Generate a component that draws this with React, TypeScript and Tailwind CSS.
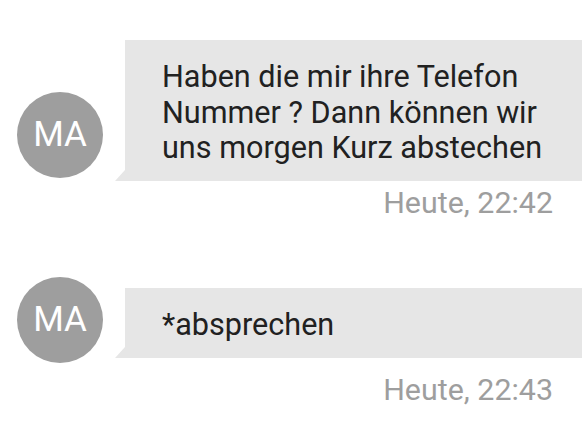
import React from 'react';

type Msg = { initials: string; lines: string[]; time: string };

const messages: Msg[] = [
  {
    initials: 'MA',
    lines: ['Haben die mir ihre Telefon', 'Nummer ? Dann können wir', 'uns morgen Kurz abstechen'],
    time: 'Heute, 22:42',
  },
  { initials: 'MA', lines: ['*absprechen'], time: 'Heute, 22:43' },
];

function Avatar({ initials, className }: { initials: string; className: string }) {
  return (
    <div
      className={`w-[86px] h-[86px] shrink-0 rounded-full bg-[#9e9e9e] text-white flex items-center justify-center text-[35px] ${className}`}
    >
      {initials}
    </div>
  );
}

export default function App() {
  return (
    <div className="w-[582px] h-[436px] bg-white overflow-hidden font-['Roboto',sans-serif]">
      {/* first message */}
      <div className="pt-[40px]">
        <div className="flex items-end">
          <Avatar initials={messages[0].initials} className="ml-[17px] mb-[3px]" />
          <div className="relative ml-[22px] flex-1 bg-[#e6e6e6] pl-[37px] pt-[19px] pb-[15.5px] text-[30.6px] leading-[35.5px] text-[#212121]">
            {messages[0].lines.map((l) => (
              <div key={l}>{l}</div>
            ))}
            <div className="absolute -left-[10px] bottom-0 w-0 h-0 border-b-[11px] border-b-[#e6e6e6] border-l-[10px] border-l-transparent" />
          </div>
        </div>
        <div className="text-right pr-[29px] mt-[4px] text-[30.4px] leading-[36px] text-[#9e9e9e]">{messages[0].time}</div>
      </div>

      {/* second message */}
      <div className="mt-[56px]">
        <div className="flex items-start">
          <Avatar initials={messages[1].initials} className="ml-[17px]" />
          <div className="relative ml-[22px] mt-[11px] flex-1 bg-[#e6e6e6] pl-[37px] pt-[18.5px] pb-[15.5px] text-[30.6px] leading-[36px] text-[#212121]">
            {messages[1].lines[0]}
            <div className="absolute -left-[10px] bottom-0 w-0 h-0 border-b-[11px] border-b-[#e6e6e6] border-l-[10px] border-l-transparent" />
          </div>
        </div>
        <div className="text-right pr-[29px] mt-[9px] text-[30.4px] leading-[36px] text-[#9e9e9e]">{messages[1].time}</div>
      </div>
    </div>
  );
}
